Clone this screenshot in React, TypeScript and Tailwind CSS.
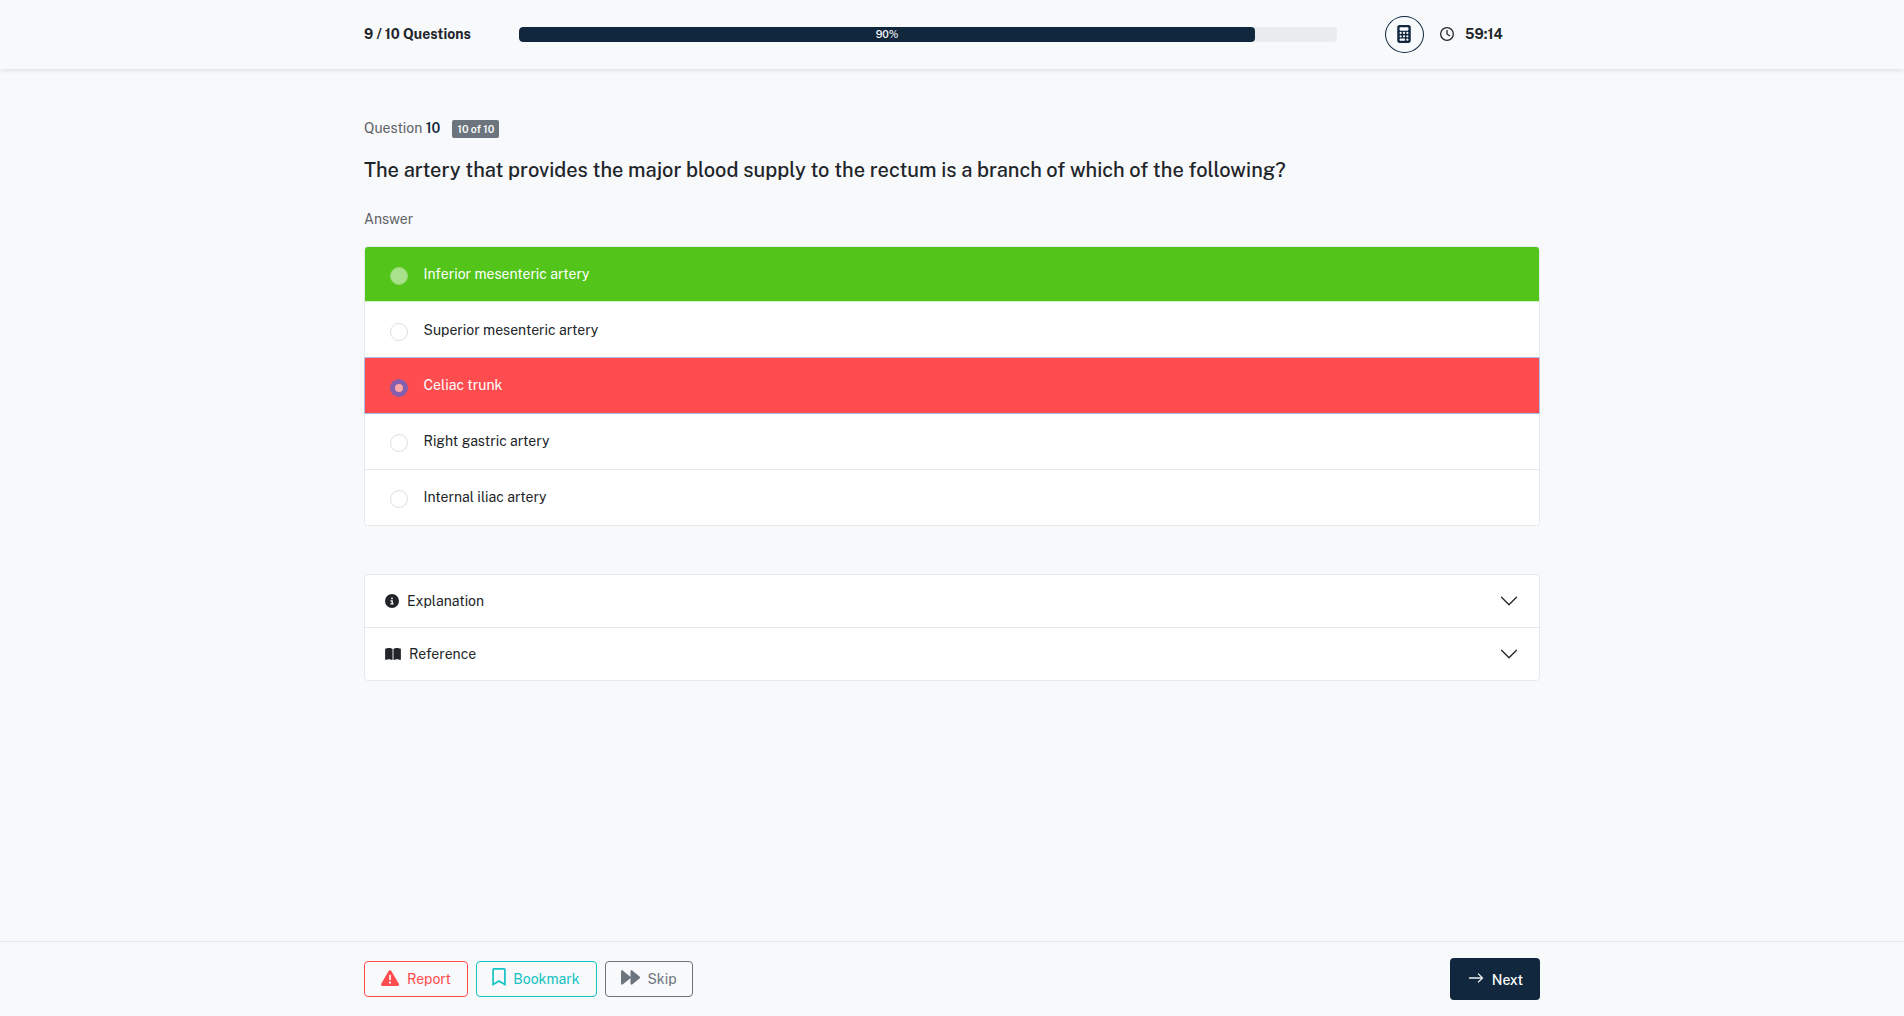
import type { ReactNode } from "react";
import { BsChevronDown, BsArrowRight } from "react-icons/bs";
import { FaForward, FaRegBookmark } from "react-icons/fa";
import { FaBookOpen, FaCalculator, FaCircleInfo, FaRegClock, FaTriangleExclamation } from "react-icons/fa6";

type State = "correct" | "wrong" | "plain";

const answers: { label: string; state: State; row: string }[] = [
  { label: "Inferior mesenteric artery", state: "correct", row: "h-[55px] rounded-t-[3px] border-b-[#d5efcb] bg-[#52c41a] pl-[25px] pt-[17px] text-white" },
  { label: "Superior mesenteric artery", state: "plain", row: "h-[56px] border-b-[#a9bde6] bg-white pl-[25px] pt-[18px]" },
  { label: "Celiac trunk", state: "wrong", row: "-mx-px h-[56px] border-x border-x-[#a9bde6] border-b-[#a9bde6] bg-[#ff4d4f] pl-[25px] pt-[17px] text-white" },
  { label: "Right gastric artery", state: "plain", row: "h-[56px] border-b-[#e5e9ee] bg-white pl-[25px] pt-[17px]" },
  { label: "Internal iliac artery", state: "plain", row: "h-[55px] rounded-b-[3px] border-b-white bg-white pl-[25px] pt-[17px]" },
];

function Radio({ state }: { state: State }) {
  if (state === "correct") return <span className="mt-[3px] size-[18px] shrink-0 rounded-full border border-[#97d874] bg-[#a9e18c]" />;
  if (state === "wrong")
    return (
      <span className="mt-[4px] flex size-[18px] shrink-0 items-center justify-center rounded-full bg-[#865fac]">
        <span className="size-2 rounded-full bg-[#ffa6a7]" />
      </span>
    );
  return <span className="mt-[3px] size-[18px] shrink-0 rounded-full border border-[#dfdfdf] bg-white" />;
}

function Panel({ icon, label, height }: { icon: ReactNode; label: string; height: string }) {
  return (
    <div className={`flex items-center px-5 ${height}`}>
      {icon}
      <span>{label}</span>
      <BsChevronDown className="ml-auto size-5" />
    </div>
  );
}

export default function App() {
  return (
    <div className="flex h-screen flex-col bg-[#f8f9fb] font-['Public_Sans','Inter',sans-serif] text-[14px] leading-5 text-[#212529] antialiased">
      <header className="h-[69px] shrink-0 shadow-[0_2px_4px_rgba(0,0,0,0.09)]">
        <div className="mx-auto flex h-[69px] w-[1176px] items-center">
          <div className="mb-px w-[155px] whitespace-nowrap font-bold">9 / 10 Questions</div>
          <div className="h-[15px] w-[818px] overflow-hidden rounded bg-[#e9ecef]">
            <div className="h-full w-[736px] rounded bg-[#10273d] text-center text-[10.5px] font-medium leading-[15px] text-white">90%</div>
          </div>
          <div className="ml-12 flex h-[37px] w-[39px] items-center justify-center rounded-[50%] border border-[#10273d] text-[#10273d]">
            <FaCalculator className="mb-[2px] mr-px size-[18px]" />
          </div>
          <FaRegClock className="mb-px ml-4 size-[14px]" />
          <span className="mb-px ml-[11px] font-bold">59:14</span>
        </div>
      </header>

      <main className="mx-auto w-[1176px] flex-1">
        <div className="mt-[49px] flex h-5 items-center">
          <span className="text-[#5f6266]">Question <b className="font-semibold text-[#10273d]">10</b></span>
          <span className="ml-3 mt-[2px] flex h-[18px] w-[47px] items-center justify-center whitespace-nowrap rounded-[2px] bg-[#6c757d] text-[10.5px] font-semibold text-white">10 of 10</span>
        </div>
        <h1 className="mt-[18px] whitespace-nowrap text-[20px] font-medium leading-7">
          The artery that provides the major blood supply to the rectum is a branch of which of the following?
        </h1>
        <div className="mt-[25px] text-[#5f6266]">Answer</div>

        <div className="mt-[17px] h-[280px] rounded border border-[#e5e9ee]">
          {answers.map((a) => (
            <div key={a.label} className={`flex items-start border-b ${a.row}`}>
              <Radio state={a.state} />
              <span className="ml-[15.5px]">{a.label}</span>
            </div>
          ))}
        </div>

        <div className="mt-[48px] h-[107px] divide-y divide-[#e5e9ee] rounded border border-[#e5e9ee] bg-white">
          <Panel height="h-[53px]" icon={<FaCircleInfo className="mr-2 size-[14px]" />} label="Explanation" />
          <Panel height="h-[52px]" icon={<FaBookOpen className="mb-px mr-2 h-[14px] w-4" />} label="Reference" />
        </div>
      </main>

      <footer className="h-[75px] shrink-0 border-t border-[#e6e8eb]">
        <div className="mx-auto flex h-[74px] w-[1176px] items-center">
          <button className="flex h-9 w-[104px] items-center justify-center rounded border border-[#ff4d4f] text-[#ff4d4f]">
            <FaTriangleExclamation className="mb-[3px] mr-2 size-[18px]" />Report
          </button>
          <button className="ml-2 flex h-9 w-[121px] items-center justify-center rounded border border-[#13c2c2] pr-px text-[#13c2c2]">
            <FaRegBookmark className="mb-[4px] mr-[7px] h-[18px] w-[14px]" />Bookmark
          </button>
          <button className="ml-2 flex h-9 w-[88px] items-center justify-center rounded border border-[#6c757d] text-[#6c757d]">
            <FaForward className="mb-[3px] mr-[7px] size-[19px]" />Skip
          </button>
          <button className="ml-auto flex h-[42px] w-[90px] items-center justify-center rounded bg-[#10273d] pl-px pt-px font-medium text-white">
            <BsArrowRight className="mb-[3px] mr-2 size-[16px]" strokeWidth={0.4} />Next
          </button>
        </div>
      </footer>
    </div>
  );
}
